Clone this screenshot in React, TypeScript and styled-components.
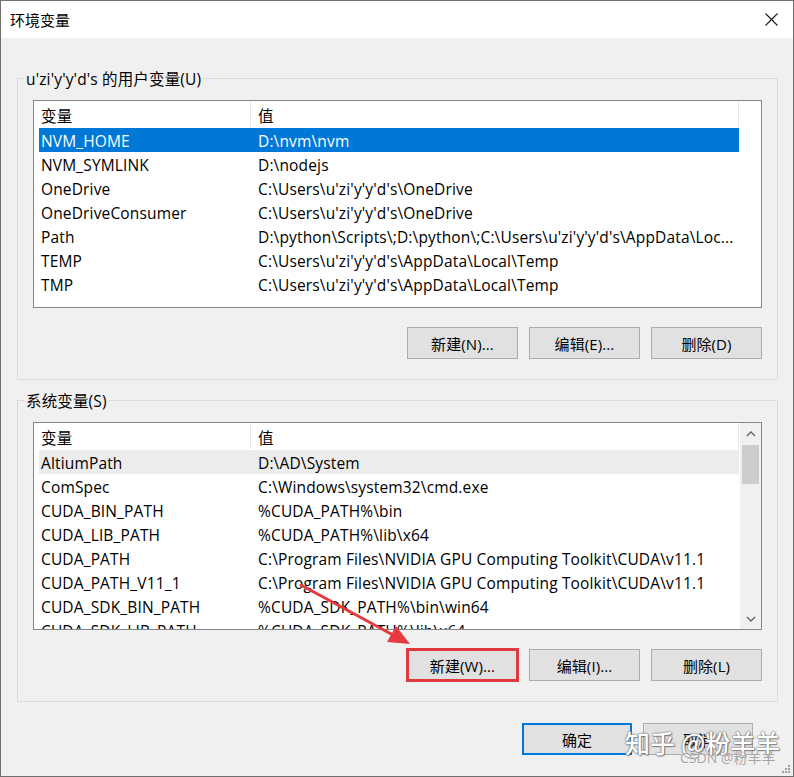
import React from "react";
import styled, { createGlobalStyle, css } from "styled-components";

const Global = createGlobalStyle`
  html, body { margin: 0; padding: 0; background: #ffffff; }
  body { font-family: "Open Sans", "Noto Sans CJK SC", sans-serif; color: #000; }
  * { box-sizing: border-box; }
`;

const Window = styled.div`
  position: relative;
  width: 794px;
  height: 777px;
  border: 1px solid #707070;
  display: flex;
  flex-direction: column;
  background: #f0f0f0;
  overflow: hidden;
`;

const TitleBar = styled.div`
  height: 37px;
  flex: none;
  background: #ffffff;
  display: flex;
  align-items: center;
  justify-content: space-between;
  padding: 0 15px 0 9px;
  font-size: 15px;
`;

const Body = styled.div`
  flex: 1;
  display: flex;
  flex-direction: column;
  padding: 30px 15px 0 16px;
  font-size: 15.5px;
  letter-spacing: 0.15px;
`;

const Group = styled.fieldset<{ $gap: number }>`
  margin: 0 0 ${(p) => p.$gap}px 0;
  padding: 0;
  border: 1px solid #dcdcdc;
  min-width: 0;
`;

const Legend = styled.legend`
  margin-left: 6px;
  padding: 0 2px;
  line-height: 22px;
  height: 20px;
`;

const GroupInner = styled.div`
  padding: 12px 15px 20px 15px;
  display: flex;
  flex-direction: column;
  gap: 19px;
`;

const ListView = styled.div`
  height: 208px;
  border: 1px solid #828790;
  background: #ffffff;
  display: flex;
  overflow: hidden;
`;

const ListContent = styled.div`
  flex: 1;
  padding-left: 5px;
  overflow: hidden;
`;

const HeaderRow = styled.div`
  display: grid;
  grid-template-columns: 212px 488px;
  width: 700px;
  height: 27px;
  align-items: center;
`;

const HeaderCell = styled.div<{ $first?: boolean }>`
  height: 25px;
  display: flex;
  align-items: center;
  padding: 2px 0 0 ${(p) => (p.$first ? 2 : 7)}px;
  border-right: 1px solid #e5e5e5;
`;

const Row = styled.div<{ $state?: "selected" | "hover" }>`
  display: grid;
  grid-template-columns: 212px 488px;
  width: 700px;
  height: 24px;
  align-items: center;
  background: ${(p) =>
    p.$state === "selected" ? "#0078d7" : p.$state === "hover" ? "#ececec" : "transparent"};
  color: ${(p) => (p.$state === "selected" ? "#ffffff" : "#000000")};
`;

const Cell = styled.div<{ $first?: boolean }>`
  padding: 2px 0 0 ${(p) => (p.$first ? 2 : 7)}px;
  white-space: nowrap;
  overflow: hidden;
`;

const ScrollBar = styled.div`
  width: 21px;
  flex: none;
  background: #f0f0f0;
  display: flex;
  flex-direction: column;
  align-items: center;
`;

const ScrollArrow = styled.div`
  height: 21px;
  width: 100%;
  display: flex;
  align-items: center;
  justify-content: center;
`;

const Thumb = styled.div`
  margin-top: 1px;
  width: 17px;
  height: 39px;
  background: #cdcdcd;
`;

const Track = styled.div`
  flex: 1;
`;

const ButtonRow = styled.div<{ $gap: number }>`
  display: flex;
  justify-content: flex-end;
  gap: ${(p) => p.$gap}px;
`;

const Button = styled.button<{ $w: number; $default?: boolean; $marked?: boolean }>`
  width: ${(p) => p.$w}px;
  height: 32px;
  padding: 0;
  background: #e1e1e1;
  border: 1px solid #adadad;
  font-family: inherit;
  font-size: 15px;
  letter-spacing: 0.1px;
  color: #000;
  ${(p) =>
    p.$default &&
    css`
      border: 2px solid #0078d7;
    `}
  ${(p) =>
    p.$marked &&
    css`
      outline: 3px solid #e0393f;
      outline-offset: -2px;
    `}
`;

const Footer = styled(ButtonRow)`
  margin-top: 21px;
  padding-right: 25px;
`;

const Overlay = styled.svg`
  position: absolute;
  left: 0;
  top: 0;
  pointer-events: none;
`;

const Watermark = styled.div`
  position: absolute;
  left: 624px;
  top: 725px;
  display: flex;
  gap: 6px;
  font-family: "Noto Sans CJK SC", sans-serif;
  font-size: 25px;
  font-weight: 500;
  line-height: 32px;
  color: #ffffff;
  white-space: nowrap;
  text-shadow: 0 0 1px #555555, 0 0 2px #777777, 1px 1px 1px rgba(0, 0, 0, 0.4);
`;

const Credit = styled.div`
  position: absolute;
  left: 679px;
  top: 748px;
  font-family: "Open Sans", "Noto Sans CJK SC", sans-serif;
  font-size: 14px;
  line-height: 18px;
  color: #a4a4a4;
  white-space: nowrap;
  text-shadow: 0 0 1px #ffffff;
`;

const Grip = styled.svg`
  position: absolute;
  right: 2px;
  bottom: 2px;
`;

type Item = [string, string];

const userVars: Item[] = [
  ["NVM_HOME", "D:\\nvm\\nvm"],
  ["NVM_SYMLINK", "D:\\nodejs"],
  ["OneDrive", "C:\\Users\\u'zi'y'y'd's\\OneDrive"],
  ["OneDriveConsumer", "C:\\Users\\u'zi'y'y'd's\\OneDrive"],
  ["Path", "D:\\python\\Scripts\\;D:\\python\\;C:\\Users\\u'zi'y'y'd's\\AppData\\Loc..."],
  ["TEMP", "C:\\Users\\u'zi'y'y'd's\\AppData\\Local\\Temp"],
  ["TMP", "C:\\Users\\u'zi'y'y'd's\\AppData\\Local\\Temp"],
];

const sysVars: Item[] = [
  ["AltiumPath", "D:\\AD\\System"],
  ["ComSpec", "C:\\Windows\\system32\\cmd.exe"],
  ["CUDA_BIN_PATH", "%CUDA_PATH%\\bin"],
  ["CUDA_LIB_PATH", "%CUDA_PATH%\\lib\\x64"],
  ["CUDA_PATH", "C:\\Program Files\\NVIDIA GPU Computing Toolkit\\CUDA\\v11.1"],
  ["CUDA_PATH_V11_1", "C:\\Program Files\\NVIDIA GPU Computing Toolkit\\CUDA\\v11.1"],
  ["CUDA_SDK_BIN_PATH", "%CUDA_SDK_PATH%\\bin\\win64"],
  ["CUDA_SDK_LIB_PATH", "%CUDA_SDK_PATH%\\lib\\x64"],
];

const Chevron = ({ up }: { up?: boolean }) => (
  <svg width="10" height="6" viewBox="0 0 10 6">
    <path
      d={up ? "M1 5 L5 1 L9 5" : "M1 1 L5 5 L9 1"}
      fill="none"
      stroke="#606060"
      strokeWidth="1.3"
    />
  </svg>
);

const VarList = ({
  items,
  highlight,
  state,
  scroll,
}: {
  items: Item[];
  highlight: number;
  state: "selected" | "hover";
  scroll?: boolean;
}) => (
  <ListView>
    <ListContent>
      <HeaderRow>
        <HeaderCell $first>变量</HeaderCell>
        <HeaderCell>值</HeaderCell>
      </HeaderRow>
      {items.map(([k, v], i) => (
        <Row key={k} $state={i === highlight ? state : undefined}>
          <Cell $first>{k}</Cell>
          <Cell>{v}</Cell>
        </Row>
      ))}
    </ListContent>
    {scroll && (
      <ScrollBar>
        <ScrollArrow>
          <Chevron up />
        </ScrollArrow>
        <Thumb />
        <Track />
        <ScrollArrow>
          <Chevron />
        </ScrollArrow>
      </ScrollBar>
    )}
  </ListView>
);

export default function App() {
  return (
    <>
      <Global />
      <Window>
        <TitleBar>
          <span>环境变量</span>
          <svg width="13" height="13" viewBox="0 0 13 13">
            <path d="M0.5 0.5 L12.5 12.5 M12.5 0.5 L0.5 12.5" stroke="#1a1a1a" strokeWidth="1.1" />
          </svg>
        </TitleBar>
        <Body>
          <Group $gap={10}>
            <Legend>u'zi'y'y'd's 的用户变量(U)</Legend>
            <GroupInner>
              <VarList items={userVars} highlight={0} state="selected" />
              <ButtonRow $gap={11}>
                <Button $w={111}>新建(N)...</Button>
                <Button $w={111}>编辑(E)...</Button>
                <Button $w={111}>删除(D)</Button>
              </ButtonRow>
            </GroupInner>
          </Group>
          <Group $gap={0}>
            <Legend>系统变量(S)</Legend>
            <GroupInner>
              <VarList items={sysVars} highlight={0} state="hover" scroll />
              <ButtonRow $gap={11}>
                <Button $w={111} $marked>
                  新建(W)...
                </Button>
                <Button $w={111}>编辑(I)...</Button>
                <Button $w={111}>删除(L)</Button>
              </ButtonRow>
            </GroupInner>
          </Group>
          <Footer $gap={11}>
            <Button $w={110} $default>
              确定
            </Button>
            <Button $w={110}>取消</Button>
          </Footer>
        </Body>
        <Overlay width="794" height="777" viewBox="0 0 794 777">
          <path d="M300 584 L392 634" stroke="#e53a3f" strokeWidth="3" strokeLinecap="round" />
          <polygon points="409,643 386,641 395,625" fill="#e53a3f" />
        </Overlay>
        <Watermark>
          <span>知乎</span>
          <span>@粉羊羊</span>
        </Watermark>
        <Credit>CSDN @粉羊羊</Credit>
        <Grip width="11" height="11" viewBox="0 0 11 11">
          {[
            [8, 0],
            [5, 3],
            [8, 3],
            [2, 6],
            [5, 6],
            [8, 6],
          ].map(([x, y]) => (
            <rect key={`${x}-${y}`} x={x} y={y + 2} width="2" height="2" fill="#a0a0a0" />
          ))}
        </Grip>
      </Window>
    </>
  );
}
